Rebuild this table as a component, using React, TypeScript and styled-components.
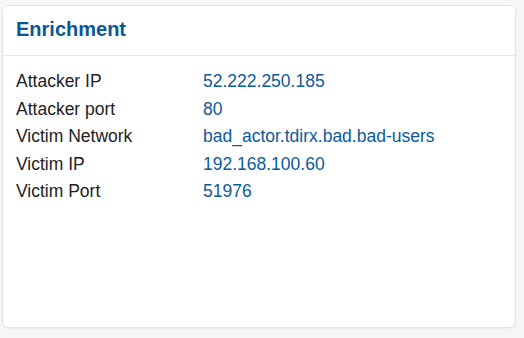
import React from 'react';
import styled, { createGlobalStyle } from 'styled-components';

// Enrichment details for the selected event
const enrichmentData = [
  { label: 'Attacker IP', value: '52.222.250.185' },
  { label: 'Attacker port', value: '80' },
  { label: 'Victim Network', value: 'bad_actor.tdirx.bad.bad-users' },
  { label: 'Victim IP', value: '192.168.100.60' },
  { label: 'Victim Port', value: '51976' },
];

const GlobalStyle = createGlobalStyle`
  html, body {
    margin: 0;
    padding: 0;
    background: #f6f6f6;
    font-family: "Liberation Sans", Arial, sans-serif;
  }
`;

const Page = styled.div`
  padding: 5px 8px 10px 2px;
  height: 338px;
  box-sizing: border-box;
`;

const Card = styled.section`
  height: 100%;
  box-sizing: border-box;
  background: #fff;
  border: 1px solid #e4e4e4;
  border-radius: 6px;
  box-shadow: 0 1px 2px rgba(0, 0, 0, 0.04);
  display: flex;
  flex-direction: column;
`;

const Header = styled.header`
  padding: 12px 13px 14px;
  border-bottom: 1px solid #e8e8e8;
`;

const Title = styled.h2`
  margin: 0;
  font-size: 20px;
  line-height: 23px;
  font-weight: 700;
  color: #0b5694;
`;

const Body = styled.div`
  padding: 12px 13px;
`;

const Row = styled.div`
  display: grid;
  grid-template-columns: 187px 1fr;
  font-size: 17.5px;
  line-height: 27.5px;
`;

const Label = styled.span`
  color: #222;
`;

const Value = styled.span`
  color: #0b5a9c;
`;

const App: React.FC = () => {
  return (
    <Page>
      <GlobalStyle />
      <Card>
        <Header>
          <Title>Enrichment</Title>
        </Header>
        <Body>
          {enrichmentData.map((row) => (
            <Row key={row.label}>
              <Label>{row.label}</Label>
              <Value>{row.value}</Value>
            </Row>
          ))}
        </Body>
      </Card>
    </Page>
  );
};

export default App;
